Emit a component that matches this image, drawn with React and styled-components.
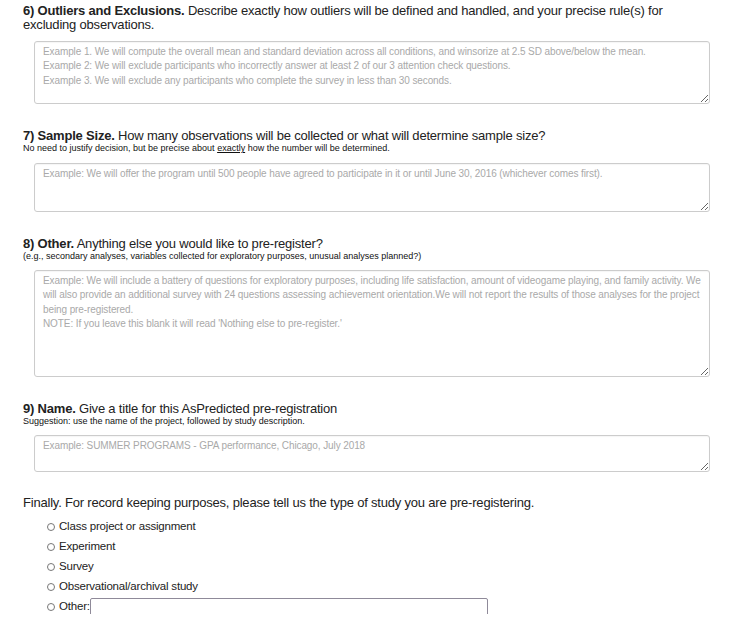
import React from 'react';
import styled, { createGlobalStyle } from 'styled-components';

const GlobalStyle = createGlobalStyle`
  html, body {
    margin: 0;
    padding: 0;
    background: #fff;
  }
  body {
    font-family: 'Liberation Sans', Arial, sans-serif;
    color: #222;
  }
`;

// Estilos principales
const Page = styled.div`
  padding: 4px 28px 0 23px;
`;

const Section = styled.div`
  margin-bottom: ${(p) => p.$after || 25}px;
`;

const Question = styled.div`
  font-size: 13px;
  line-height: 14px;
  letter-spacing: -0.2px;
  color: #222;
`;

const Label = styled.b`
  font-weight: bold;
`;

const Hint = styled.div`
  font-size: 9px;
  line-height: 11px;
  color: #111;

  u {
    text-decoration: underline;
  }
`;

const Field = styled.div`
  padding-left: 11px;
  margin-top: ${(p) => p.$gap}px;
`;

const Box = styled.textarea`
  display: block;
  box-sizing: border-box;
  width: 100%;
  height: ${(p) => p.$h}px;
  margin: 0;
  padding: 3px 8px 2px;
  border: 1px solid #ccc;
  border-radius: 3px;
  box-shadow: inset 0 1px 1px rgba(0, 0, 0, 0.04);
  font-family: 'Liberation Sans', Arial, sans-serif;
  font-size: 10px;
  line-height: 14.3px;
  letter-spacing: -0.1px;
  color: #333;
  resize: vertical;

  &::placeholder {
    color: #a9a9a9;
  }
`;

const Finally = styled.p`
  margin: 0;
  font-size: 13px;
  line-height: 16px;
  letter-spacing: -0.2px;
  color: #222;
`;

const Options = styled.div`
  display: flex;
  flex-direction: column;
  gap: 4px;
  padding: 7px 0 0 24px;
`;

const Option = styled.label`
  display: flex;
  align-items: center;
  height: 16px;
  font-size: 11.5px;
  letter-spacing: -0.2px;
  color: #222;
`;

const Radio = styled.input.attrs({ type: 'radio', name: 'studytype' })`
  appearance: none;
  width: 8px;
  height: 8px;
  margin: 1px 4px 0 0;
  border: 1px solid #777;
  border-radius: 50%;
  background: #fff;
`;

const OtherInput = styled.input.attrs({ type: 'text' })`
  box-sizing: border-box;
  width: 398px;
  height: 19px;
  margin: 3px 0 0 0;
  border: 1px solid #8f8a99;
  border-radius: 2px;
  font-family: 'Liberation Sans', Arial, sans-serif;
`;

// Componente principal
const App = () => {
  const options = [
    'Class project or assignment',
    'Experiment',
    'Survey',
    'Observational/archival study',
  ];

  return (
    <Page>
      <GlobalStyle />

      <Section>
        <Question>
          <Label>6) Outliers and Exclusions.</Label> Describe exactly how outliers will be defined and handled, and your precise rule(s) for excluding observations.
        </Question>
        <Field $gap={9}>
          <Box
            $h={63}
            placeholder={
              'Example 1. We will compute the overall mean and standard deviation across all conditions, and winsorize at 2.5 SD above/below the mean.\nExample 2: We will exclude participants who incorrectly answer at least 2 of our 3 attention check questions.\nExample 3. We will exclude any participants who complete the survey in less than 30 seconds.'
            }
          />
        </Field>
      </Section>

      <Section>
        <Question>
          <Label>7) Sample Size.</Label> How many observations will be collected or what will determine sample size?
        </Question>
        <Hint>
          No need to justify decision, but be precise about <u>exactly</u> how the number will be determined.
        </Hint>
        <Field $gap={9}>
          <Box
            $h={49}
            placeholder="Example: We will offer the program until 500 people have agreed to participate in it or until June 30, 2016 (whichever comes first)."
          />
        </Field>
      </Section>

      <Section>
        <Question>
          <Label>8) Other.</Label> Anything else you would like to pre-register?
        </Question>
        <Hint>
          (e.g., secondary analyses, variables collected for exploratory purposes, unusual analyses planned?)
        </Hint>
        <Field $gap={8}>
          <Box
            $h={107}
            placeholder={
              "Example: We will include a battery of questions for exploratory purposes, including life satisfaction, amount of videogame playing, and family activity. We will also provide an additional survey with 24 questions assessing achievement orientation.We will not report the results of those analyses for the project being pre-registered.\nNOTE: If you leave this blank it will read 'Nothing else to pre-register.'"
            }
          />
        </Field>
      </Section>

      <Section $after={23}>
        <Question>
          <Label>9) Name.</Label> Give a title for this AsPredicted pre-registration
        </Question>
        <Hint>Suggestion: use the name of the project, followed by study description.</Hint>
        <Field $gap={8}>
          <Box $h={37} placeholder="Example: SUMMER PROGRAMS - GPA performance, Chicago, July 2018" />
        </Field>
      </Section>

      <Finally>
        Finally. For record keeping purposes, please tell us the type of study you are pre-registering.
      </Finally>
      <Options>
        {options.map((opt) => (
          <Option key={opt}>
            <Radio />
            {opt}
          </Option>
        ))}
        <Option>
          <Radio />
          Other:
          <OtherInput />
        </Option>
      </Options>
    </Page>
  );
};

export default App;
